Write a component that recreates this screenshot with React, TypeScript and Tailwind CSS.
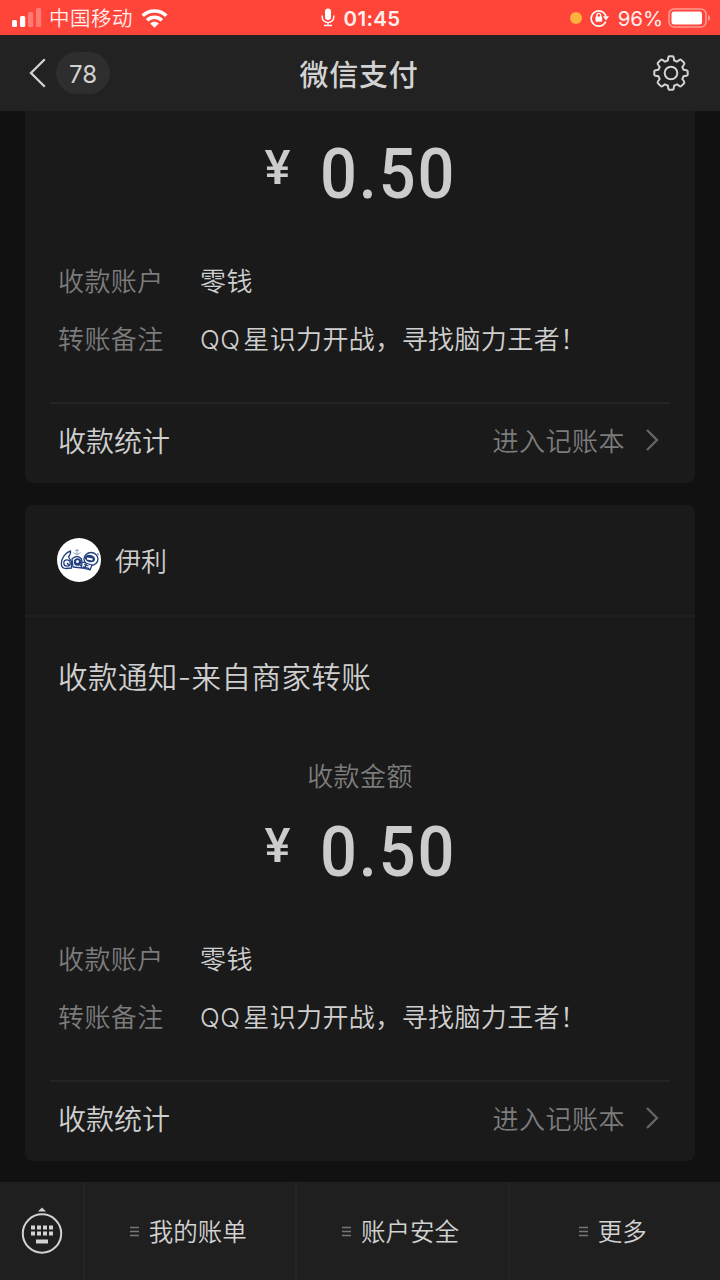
import React from "react";

function StatusBar() {
  return (
    <div className="flex h-[35px] shrink-0 items-center justify-between bg-[#ff443a] pl-3 pr-[9px] text-[#fff0ee]">
      <div className="flex w-[240px] items-center">
        <svg className="mr-[7px]" width="30" height="20" viewBox="0 0 30 20">
          <rect x="0" y="12" width="5" height="7" rx="1.5" fill="#fff" />
          <rect x="8" y="8" width="5.200" height="11" rx="1.500" fill="#fff" />
          <rect x="16" y="4" width="5.200" height="15" rx="1.500" fill="#ff7a72" />
          <rect x="24" y="0" width="5.200" height="19" rx="1.500" fill="#ff7a72" />
        </svg>
        <span className="text-[20.5px] font-[350] leading-[35px] tracking-[0.500px]">中国移动</span>
        <svg className="ml-2" width="27" height="20" viewBox="0 0 27 20">
          <g fill="none" stroke="#fff" strokeWidth="3.600">
            <path d="M1.700 7.800C8.300 1.300 18.700 1.300 25.300 7.800" />
            <path d="M6.100 12.300C10.300 8.300 16.700 8.300 20.900 12.300" />
          </g>
          <path d="M9.200 15.400C11.600 13.300 15.400 13.300 17.800 15.400L13.500 19.700Z" fill="#fff" />
        </svg>
      </div>
      <div className="flex items-center gap-[9px]">
        <svg className="-ml-[2px]" width="14" height="19" viewBox="0 0 14 19">
          <rect x="4" y="0.500" width="6" height="11.500" rx="3" fill="#fff" />
          <path d="M1.200 7.500V9.200A5.800 5.300 0 0 0 12.800 9.200V7.500M7 14.500V17.500M3 17.500H11" fill="none" stroke="#fff" strokeWidth="1.400" />
        </svg>
        <span className="mt-[2px] font-['Inter',sans-serif] text-[20.5px] font-semibold leading-[35px] tracking-[0.300px]">01:45</span>
      </div>
      <div className="flex w-[240px] items-center justify-end">
        <div className="mr-2 size-3 rounded-full bg-[#ffb13d]" />
        <svg className="mr-[9px] mt-[1px]" width="19" height="18" viewBox="0 0 19 18">
          <path d="M15.700 12.600A7.600 7.600 0 1 1 15.900 7" fill="none" stroke="#fff" strokeWidth="1.600" />
          <path d="M13 7.300H19L16 11.400Z" fill="#fff" />
          <rect x="5.500" y="7.600" width="6.600" height="5.200" rx="0.700" fill="#fff" />
          <path d="M6.900 8V6.300A1.900 1.900 0 0 1 10.700 6.300V8" fill="none" stroke="#fff" strokeWidth="1.300" />
        </svg>
        <span className="mt-[1px] font-['Inter',sans-serif] text-[20.5px] leading-[35px] tracking-[-0.100px]">96%</span>
        <svg className="ml-[5px]" width="43" height="20" viewBox="0 0 43 20">
          <rect x="1" y="1" width="37" height="18" rx="5" fill="none" stroke="#ff9b94" strokeWidth="1.600" />
          <rect x="3.500" y="3.500" width="30.500" height="13" rx="2.500" fill="#fff" />
          <path d="M40 7C42.800 7.800 42.800 12.200 40 13Z" fill="#ff9b94" />
        </svg>
      </div>
    </div>
  );
}

function GearIcon() {
  return (
    <svg width="36" height="36" viewBox="0 0 36 36" fill="none" stroke="#d2d2d2" strokeWidth="2" strokeLinejoin="round">
      <path d="M16.200 1.300H19.800Q20.500 1.300 20.700 2.500L21.200 5.500Q22.500 5.900 24 6.700L26.500 4.900Q27.500 4.300 28.200 4.900L31.100 7.800Q31.700 8.500 31.100 9.500L29.300 12Q30.100 13.500 30.500 14.800L33.500 15.300Q34.700 15.500 34.700 16.200V19.800Q34.700 20.500 33.500 20.700L30.500 21.200Q30.100 22.500 29.300 24L31.100 26.500Q31.700 27.500 31.100 28.200L28.200 31.100Q27.500 31.700 26.500 31.100L24 29.300Q22.500 30.100 21.200 30.500L20.700 33.500Q20.500 34.700 19.800 34.700H16.200Q15.500 34.700 15.300 33.500L14.800 30.500Q13.500 30.100 12 29.300L9.500 31.100Q8.500 31.700 7.800 31.100L4.900 28.200Q4.300 27.500 4.900 26.500L6.700 24Q5.900 22.500 5.500 21.200L2.500 20.700Q1.300 20.500 1.300 19.800V16.200Q1.300 15.500 2.500 15.300L5.500 14.800Q5.900 13.500 6.700 12L4.900 9.500Q4.300 8.500 4.900 7.800L7.800 4.900Q8.500 4.300 9.500 4.900L12 6.700Q13.500 5.900 14.800 5.500L15.300 2.500Q15.500 1.300 16.200 1.300Z" />
      <circle cx="18" cy="18" r="6.300" />
    </svg>
  );
}

function NavBar() {
  return (
    <div className="flex h-[76px] shrink-0 items-center bg-[#222222] px-[29px] text-[#d2d2d2]">
      <div className="flex flex-1 items-center gap-[10px]">
        <svg width="17" height="30" viewBox="0 0 17 30" fill="none" stroke="#d2d2d2" strokeWidth="2.300">
          <path d="M15.800 1.300L2 15L15.800 28.700" />
        </svg>
        <div className="flex h-[42px] w-[54px] items-center justify-center rounded-full bg-[#2e2e2e] pt-[3px] font-['Inter',sans-serif] text-[24px]">
          78
        </div>
      </div>
      <h1 className="text-[29px] font-medium leading-none tracking-[0.700px]">微信支付</h1>
      <div className="mr-[2px] flex flex-1 justify-end">
        <GearIcon />
      </div>
    </div>
  );
}

function BrandLogo() {
  return (
    <svg width="44" height="44" viewBox="0 0 44 44">
      <circle cx="22" cy="22" r="22" fill="#fff" />
      <g fill="#fff" stroke="#203e80" strokeWidth="1.300" strokeLinejoin="round">
        <path d="M13.500 13C9 14 4.200 20 4.300 26C4.500 31 8 31 14.500 30V23.500L11.500 19C13 17 14 15 13.500 13Z" />
        <circle cx="10" cy="25" r="3.200" />
        <path d="M15 21Q20 16 24.500 21L26 30L16 29Z" />
        <ellipse cx="34" cy="21" rx="7" ry="6.500" />
        <path d="M25 24L35 27L33 32L24.500 29.500Z" />
      </g>
      <circle cx="20.500" cy="24" r="3.700" fill="#203e80" />
      <circle cx="20.500" cy="23.500" r="1.500" fill="#fff" />
      <ellipse cx="33" cy="20.500" rx="5.200" ry="3.700" fill="#203e80" transform="rotate(16 33 20.500)" />
      <path d="M30 20.500L35.500 21.500" stroke="#fff" strokeWidth="1.800" />
      <path d="M27 26.500L31.500 28M29.500 25.500L27.500 31M26 29L32.500 30.700M10 25L12.500 28M21 25L24 28" fill="none" stroke="#203e80" strokeWidth="1.300" />
      <path d="M16.500 14.500Q20 18 23.500 14.500M20 11.500V17M18 13L20 11.500L22 13M40 15.500L42 16.500M41 15V17.500" fill="none" stroke="#8194b9" strokeWidth="0.900" />
    </svg>
  );
}

function Amount() {
  return (
    <div className="flex h-[100px] items-start justify-center font-['Roboto',sans-serif] font-medium text-[#cccccc]">
      <span className="mr-[29px] mt-[12px] text-[49px] leading-[60px]">¥</span>
      <span className="mt-[10px] w-[136px] origin-left scale-x-[0.915] whitespace-nowrap text-[71px] leading-[76px] tracking-[2px]">0.50</span>
    </div>
  );
}

function DetailRow({ label, value }: { label: string; value: React.ReactNode }) {
  return (
    <div className="flex h-[58px] items-center font-['Inter','Noto_Sans_CJK_SC',sans-serif] text-[26px] font-[350] tracking-[0.400px]">
      <span className="w-[142px] shrink-0 text-[#7c7c7c]">{label}</span>
      <span className="whitespace-nowrap text-[#cfcfcf]">{value}</span>
    </div>
  );
}

function CardDetails() {
  return (
    <>
      <div className="mx-[33px]">
        <DetailRow label="收款账户" value="零钱" />
        <DetailRow
          label="转账备注"
          value={
            <>
              <span className="mr-[3px]">QQ</span>星识力开战，寻找脑力王者！
            </>
          }
        />
      </div>
      <div className="mx-[25px] mt-[34px] flex h-[81px] items-start justify-between border-t-2 border-[#242424] pl-2 pr-[10px]">
        <span className="text-[28px] font-[350] leading-[72px] text-[#cfcfcf]">收款统计</span>
        <div className="flex items-center gap-5 text-[26px] font-[350] leading-[72px] tracking-[0.500px] text-[#7c7c7c]">
          进入记账本
          <svg width="15" height="24" viewBox="0 0 15 24" fill="none" stroke="#666666" strokeWidth="2.300">
            <path d="M2 2L12 12L2 22" />
          </svg>
        </div>
      </div>
    </>
  );
}

function MenuItem({ label }: { label: string }) {
  return (
    <div className="flex flex-1 items-center justify-center gap-[10px] border-l-2 border-[#242424] pr-[4px]">
      <svg width="9" height="11" viewBox="0 0 9 11" stroke="#777777" strokeWidth="1.300">
        <path d="M0 1.500H9M0 5.500H9M0 9.500H9" />
      </svg>
      <span className="text-[24.5px] font-[350] leading-none text-[#d2d2d2]">{label}</span>
    </div>
  );
}

function BottomBar() {
  return (
    <div className="flex h-[98px] shrink-0 bg-[#1f1f1f]">
      <div className="flex w-[83px] items-center justify-center">
        <svg width="42" height="48" viewBox="0 0 42 48">
          <circle cx="21" cy="26.500" r="19.200" fill="none" stroke="#d2d2d2" strokeWidth="2" />
          <path d="M17 4.500L21 0.500L25 4.500Z" fill="#d2d2d2" />
          <path d="M10 18.500h4v4h-4zM16 18.500h4v4h-4zM22 18.500h4v4h-4zM28 18.500h4v4h-4zM10 24.500h4v4h-4zM16 24.500h4v4h-4zM22 24.500h4v4h-4zM28 24.500h4v4h-4zM15 32.500h12v4H15z" fill="#d2d2d2" />
        </svg>
      </div>
      <MenuItem label="我的账单" />
      <MenuItem label="账户安全" />
      <MenuItem label="更多" />
    </div>
  );
}

export default function App() {
  return (
    <div className="flex h-[1280px] w-[720px] flex-col overflow-hidden bg-[#111111] font-['Noto_Sans_CJK_SC',sans-serif]">
      <StatusBar />
      <NavBar />
      <main className="flex h-[1071px] shrink-0 flex-col gap-[22px] px-[25px]">
        <section className="h-[372px] rounded-b-lg bg-[#1a1a1a] pt-[15px]">
          <Amount />
          <div className="h-[26px]" />
          <CardDetails />
        </section>
        <section className="h-[656px] rounded-lg bg-[#1a1a1a]">
          <div className="flex h-[112px] items-center gap-[14px] border-b-2 border-[#1f1f1f] pl-8">
            <BrandLogo />
            <span className="text-[26px] font-[350] leading-none text-[#cfcfcf]">伊利</span>
          </div>
          <h2 className="ml-[33px] mt-[30px] font-['Inter','Noto_Sans_CJK_SC',sans-serif] text-[29.5px] font-[350] leading-[60px] tracking-[0.450px] text-[#cfcfcf]">收款通知-来自商家转账</h2>
          <p className="mt-[48px] text-center text-[26px] font-[350] leading-[40px] tracking-[0.400px] text-[#7c7c7c]">收款金额</p>
          <div className="h-[9px]" />
          <Amount />
          <div className="h-[26px]" />
          <CardDetails />
        </section>
      </main>
      <BottomBar />
    </div>
  );
}
